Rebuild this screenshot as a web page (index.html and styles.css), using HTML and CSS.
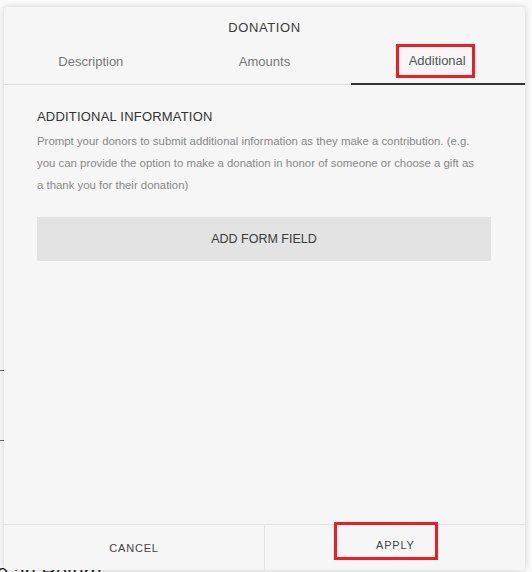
FILE: index.html
```html
<!DOCTYPE html>
<html lang="en">
<head>
    <meta charset="UTF-8">
    <meta name="viewport" content="width=device-width, initial-scale=1.0">
    <title>Donation</title>
    <link rel="stylesheet" href="styles.css">
</head>
<body>
    <div class="page">
        <div class="page-rule rule-one"></div>
        <div class="page-rule rule-two"></div>
        <p class="page-text">e an Return</p>
    </div>

    <div class="dialog">
        <div class="dialog-title">DONATION</div>
        <div class="tabs">
            <div class="tab">Description</div>
            <div class="tab">Amounts</div>
            <div class="tab active"><span class="marked tab-mark">Additional</span></div>
        </div>

        <div class="dialog-body">
            <h2 class="section-title">ADDITIONAL INFORMATION</h2>
            <p class="section-text">Prompt your donors to submit additional information as they make a contribution. (e.g. you can provide the option to make a donation in honor of someone or choose a gift as a thank you for their donation)</p>
            <button class="add-field">ADD FORM FIELD</button>
        </div>

        <div class="dialog-footer">
            <button class="footer-button">CANCEL</button>
            <button class="footer-button apply-cell"><span class="marked apply">APPLY</span></button>
        </div>
    </div>
</body>
</html>
```

FILE: styles.css
```css
body {
    margin: 0;
    background: #fafafa;
    font-family: 'Liberation Sans', Arial, sans-serif;
    width: 532px;
    height: 572px;
    overflow: hidden;
    position: relative;
}

.page {
    height: 572px;
    position: relative;
}

.page-rule {
    position: absolute;
    left: 0;
    width: 6px;
    height: 1px;
    background: #666;
}

.rule-one { top: 370px; }
.rule-two { top: 440px; }

.page-text {
    position: absolute;
    left: -3px;
    top: 561px;
    margin: 0;
    font-size: 20px;
    color: #222;
}

.dialog {
    position: absolute;
    left: 4px;
    top: 7px;
    width: 521px;
    height: 563px;
    background: #f6f6f6;
    border-radius: 4px;
    box-shadow: 0 0 6px rgba(0, 0, 0, 0.18);
    display: flex;
    flex-direction: column;
}

.dialog-title {
    text-align: center;
    font-size: 13px;
    letter-spacing: 0.6px;
    color: #3a3a3a;
    padding-top: 13px;
    height: 24px;
}

.tabs {
    display: flex;
    border-bottom: 1px solid #dcdcdc;
}

.tab {
    flex: 1;
    height: 40px;
    display: flex;
    align-items: center;
    justify-content: center;
    font-size: 13px;
    color: #777;
    padding-bottom: 6px;
    box-sizing: border-box;
}

.tab.active {
    color: #555;
    border-bottom: 2px solid #333;
    margin-bottom: -1px;
    height: 41px;
}

.marked {
    border: 3px solid #ee1c25;
}

.tab-mark {
    padding: 6px 6px 7px 10px;
    margin-right: 6px;
}

.dialog-body {
    flex: 1;
    padding: 24px 34px 0 33px;
}

.section-title {
    margin: 0;
    font-size: 13px;
    font-weight: normal;
    color: #333;
    letter-spacing: 0.2px;
}

.section-text {
    max-width: 444px;
    margin: 6px 0 0;
    font-size: 11.4px;
    line-height: 22px;
    color: #888;
}

.add-field {
    display: block;
    width: 100%;
    height: 44px;
    margin-top: 21px;
    border: none;
    background: #e3e3e3;
    font-family: inherit;
    font-size: 12.5px;
    color: #3a3a3a;
}

.dialog-footer {
    display: flex;
    border-top: 1px solid #e2e2e2;
    height: 45px;
}

.footer-button {
    flex: 1;
    border: none;
    background: none;
    font-family: inherit;
    font-size: 11px;
    letter-spacing: 0.8px;
    color: #444;
    padding: 0;
}

.footer-button + .footer-button {
    border-left: 1px solid #e2e2e2;
}

.apply-cell {
    display: flex;
    align-items: flex-start;
    justify-content: flex-start;
}

.apply {
    display: block;
    line-height: 12px;
    padding: 14px 20px 6px 39px;
    margin: -3px 0 0 69px;
}
```
